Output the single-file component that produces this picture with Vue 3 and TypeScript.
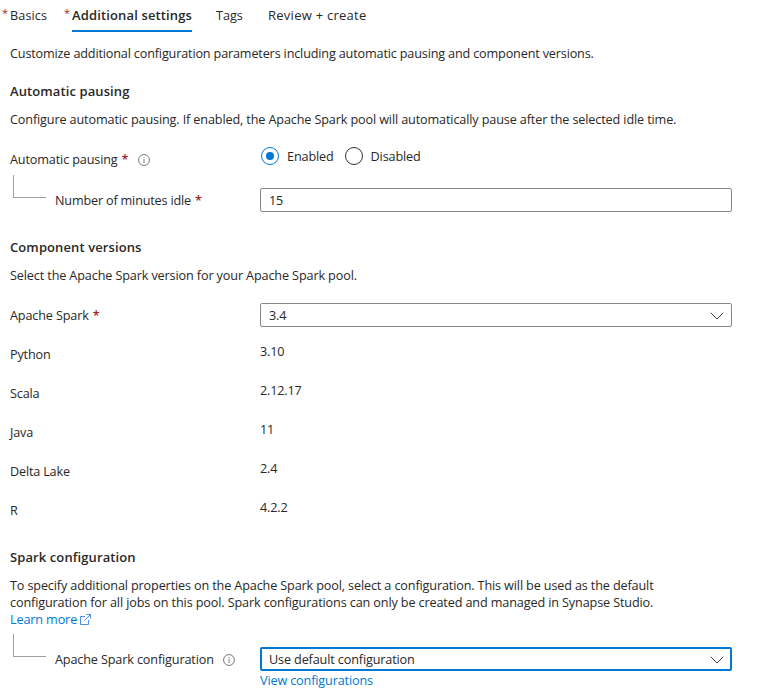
<script setup lang="ts">
import { ref } from 'vue'

interface VersionRow {
  name: string
  value: string
}

const tabs = [
  { label: 'Basics', kind: 'basics', required: true },
  { label: 'Additional settings', kind: 'active', required: true },
  { label: 'Tags', kind: 'tags', required: false },
  { label: 'Review + create', kind: 'review', required: false },
]

const versions: VersionRow[] = [
  { name: 'Python', value: '3.10' },
  { name: 'Scala', value: '2.12.17' },
  { name: 'Java', value: '11' },
  { name: 'Delta Lake', value: '2.4' },
  { name: 'R', value: '4.2.2' },
]

const pausing = ref(true)
const minutes = ref('15')
</script>

<template>
  <main class="page">
    <nav class="tabs">
      <a v-for="t in tabs" :key="t.label" class="tab" :class="t.kind">
        <span v-if="t.required" class="tab-star">*</span>{{ t.label }}
      </a>
    </nav>

    <p class="text intro">Customize additional configuration parameters including automatic pausing and component versions.</p>

    <h2 class="heading h-pausing">Automatic pausing</h2>
    <p class="text configure">Configure automatic pausing. If enabled, the Apache Spark pool will automatically pause after the selected idle time.</p>

    <div class="row radio-row">
      <div class="label pausing-label">
        <span>Automatic pausing</span><span class="star">*</span>
        <svg class="info" viewBox="0 0 12 12"><circle cx="6" cy="6" r="5.45" /><path d="M6 5v4M6 3v1" /></svg>
      </div>
      <div class="radios">
        <button class="radio" :class="{ on: pausing }" @click="pausing = true"><i class="dot"></i><span>Enabled</span></button>
        <button class="radio" :class="{ on: !pausing }" @click="pausing = false"><i class="dot"></i><span>Disabled</span></button>
      </div>
    </div>

    <div class="row nested">
      <div class="label nested-label">
        <i class="elbow"></i><span class="minutes-label">Number of minutes idle</span><span class="star">*</span>
      </div>
      <input v-model="minutes" class="field" />
    </div>

    <h2 class="heading h-versions">Component versions</h2>
    <p class="text select-text">Select the Apache Spark version for your Apache Spark pool.</p>

    <div class="row spark-row">
      <div class="label"><span>Apache Spark</span><span class="star">*</span></div>
      <div class="field select">
        <span>3.4</span>
        <svg class="chevron" viewBox="0 0 14 8"><path d="M0.8 0.8L7 7L13.2 0.8" /></svg>
      </div>
    </div>

    <dl class="versions">
      <div v-for="v in versions" :key="v.name" class="version">
        <dt class="label">{{ v.name }}</dt>
        <dd class="value">{{ v.value }}</dd>
      </div>
    </dl>

    <h2 class="heading h-config">Spark configuration</h2>
    <p class="para">
      <span class="line line-a">To specify additional properties on the Apache Spark pool, select a configuration. This will be used as the default</span>
      <span class="line line-b">configuration for all jobs on this pool. Spark configurations can only be created and managed in Synapse Studio.</span>
      <a class="line link"><span>Learn more</span><svg class="external" viewBox="0 0 11 11"><path d="M5 2.5H.5v8h8V6M6.5.5h4v4M10.5.5L4.3 6.7" /></svg></a>
    </p>

    <div class="row nested config-row">
      <div class="label nested-label">
        <i class="elbow"></i><span class="config-label">Apache Spark configuration</span>
        <svg class="info" viewBox="0 0 12 12"><circle cx="6" cy="6" r="5.45" /><path d="M6 5v4M6 3v1" /></svg>
      </div>
      <div class="field select focused">
        <span>Use default configuration</span>
        <svg class="chevron" viewBox="0 0 14 8"><path d="M0.8 0.8L7 7L13.2 0.8" /></svg>
      </div>
    </div>
    <a class="link view">View configurations</a>
  </main>
</template>

<style>
body {
  background: #fff;
}
</style>

<style scoped>
.page {
  box-sizing: border-box;
  width: 765px;
  height: 691px;
  padding: 6px 0 0 10px;
  overflow: hidden;
  color: #292827;
  font: 12.65px/18px 'Open Sans', 'Noto Sans', sans-serif;
  letter-spacing: -0.14px;
  white-space: nowrap;
}
h2, p, dl, dd {
  margin: 0;
}
.tabs {
  display: flex;
  height: 26px;
  letter-spacing: 0;
}
.tab {
  box-sizing: border-box;
  position: relative;
  height: 26px;
}
.tab-star {
  position: absolute;
  left: -8px;
  top: -2px;
  color: #a4262c;
  font-size: 11px;
  font-weight: 400;
}
.basics {
  width: 62px;
  letter-spacing: 0.1px;
}
.active {
  width: 120px;
  margin-right: 24px;
  border-bottom: 2px solid #0078d4;
  font-size: 13px;
  font-weight: 600;
  letter-spacing: 0.14px;
}
.tags { width: 52px; }
.review {
  font-size: 13px;
  letter-spacing: 0.26px;
}
.intro {
  margin-top: 12px;
  letter-spacing: -0.163px;
}
.heading {
  font-size: 13px;
  line-height: 18px;
  font-weight: 600;
  letter-spacing: 0.1px;
}
.h-pausing { margin-top: 20px; }
.configure {
  margin-top: 10px;
  letter-spacing: -0.133px;
}
.row {
  display: flex;
}
.label {
  display: flex;
  width: 250px;
  flex: none;
}
.star {
  margin-left: 4px;
  color: #a4262c;
  font-weight: 600;
}
.minutes-label {
  letter-spacing: -0.18px;
}
.info {
  width: 12px;
  height: 12px;
  margin: 4px 0 0 10px;
  fill: none;
  stroke: #6b6967;
  stroke-width: 0.9;
}
.radio-row { margin-top: 19px; }
.pausing-label { padding-top: 3px; }
.radios {
  display: flex;
  gap: 11px;
  padding-left: 1px;
}
.radio {
  display: flex;
  height: 18px;
  padding: 0;
  border: 0;
  background: none;
  color: inherit;
  font: inherit;
  letter-spacing: inherit;
}
.dot {
  box-sizing: border-box;
  display: grid;
  place-items: center;
  width: 18px;
  height: 18px;
  margin-right: 8px;
  border: 1px solid #323130;
  border-radius: 50%;
}
.on .dot { border-color: #0078d4; }
.on .dot::after {
  content: '';
  width: 8px;
  height: 8px;
  border-radius: 50%;
  background: #0078d4;
}
.nested {
  height: 37px;
  margin-top: 7px;
}
.nested-label { padding-top: 16px; box-sizing: border-box; }
.elbow {
  box-sizing: border-box;
  width: 33px;
  height: 23px;
  margin: -16px 9px 0 3px;
  border: solid #a19f9d;
  border-width: 0 0 1px 1px;
}
.field {
  box-sizing: border-box;
  width: 472px;
  height: 24px;
  padding: 0 8px;
  border: 1px solid #8a8886;
  border-radius: 2px;
  outline: 0;
  background: #fff;
  color: inherit;
  font: inherit;
  letter-spacing: inherit;
}
.nested .field { margin-top: 13px; }
.h-versions { margin-top: 26px; }
.select-text {
  margin-top: 10px;
  letter-spacing: -0.13px;
}
.spark-row { margin-top: 19px; }
.spark-row .label { padding-top: 3px; }
.select {
  display: flex;
  justify-content: space-between;
  padding-top: 2px;
  padding-right: 7.5px;
}
.chevron {
  width: 14px;
  height: 8px;
  margin-top: 5.5px;
  fill: none;
  stroke: #3b3a39;
  stroke-width: 1;
}
.versions {
  display: grid;
  grid-auto-rows: 21px;
  row-gap: 18px;
  margin-top: 15px;
  letter-spacing: -0.18px;
}
.version { display: flex; }
.version .label { padding-top: 3px; }
.h-config { margin-top: 29px; }
.para {
  display: flex;
  flex-direction: column;
  margin-top: 11px;
  line-height: 17px;
}
.line { height: 17px; }
.line-b { letter-spacing: -0.13px; }
.link { display: flex; color: #0078d4; }
.external {
  width: 11px;
  height: 11px;
  margin: 3px 0 0 3px;
  fill: none;
  stroke: #3a83dc;
  stroke-width: 0.9;
}
.config-row { margin-top: 6px; }
.config-row .info { margin-left: 9px; }
.config-row .field {
  padding: 1px 6.5px 0 7px;
  border: 2px solid #0078d4;
}
.view { margin-left: 250px; }
</style>
